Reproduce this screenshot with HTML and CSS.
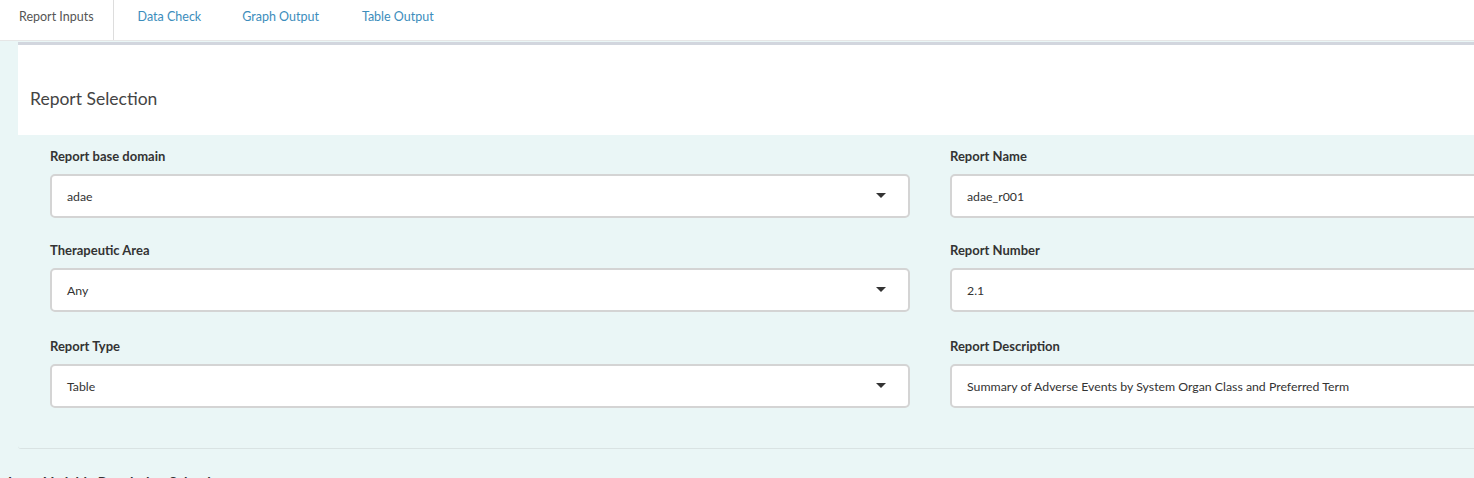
FILE: index.html
```html
<!DOCTYPE html>
<html>
<head>
<meta charset="utf-8">
<link rel="stylesheet" href="styles.css">
</head>
<body>
<div class="tabs">
  <div class="tab active">Report Inputs</div>
  <div class="tab">Data Check</div>
  <div class="tab">Graph Output</div>
  <div class="tab">Table Output</div>
</div>
<div class="content">
  <div class="box">
    <div class="box-header">Report Selection</div>
    <div class="box-body">
      <div class="field">
        <div class="label">Report base domain</div>
        <div class="input select">adae<span class="caret"></span></div>
      </div>
      <div class="field">
        <div class="label">Report Name</div>
        <div class="input">adae_r001</div>
      </div>
      <div class="field">
        <div class="label">Therapeutic Area</div>
        <div class="input select">Any<span class="caret"></span></div>
      </div>
      <div class="field">
        <div class="label">Report Number</div>
        <div class="input">2.1</div>
      </div>
      <div class="field">
        <div class="label">Report Type</div>
        <div class="input select">Table<span class="caret"></span></div>
      </div>
      <div class="field">
        <div class="label">Report Description</div>
        <div class="input">Summary of Adverse Events by System Organ Class and Preferred Term</div>
      </div>
    </div>
  </div>
  <div class="next">Input Variable Population Selection</div>
</div>
</body>
</html>
```
FILE: styles.css
```css
html, body {
  margin: 0;
  padding: 0;
}
body {
  font-family: "Lato", "Source Sans Pro", sans-serif;
  background: #eaf6f6;
  color: #333;
  overflow: hidden;
  width: 1474px;
  height: 478px;
}
.tabs {
  display: flex;
  height: 40px;
  background: #fff;
  border-bottom: 1px solid #e6e6e6;
}
.tab {
  font-size: 12.5px;
  color: #3c8dbc;
  line-height: 33px;
  padding: 0 22px 0 21px;
}
.tab:nth-child(2) {
  padding-left: 24px;
}
.tab:nth-child(3) {
  padding-left: 19px;
}
.tab.active {
  color: #555;
  padding: 0 19px 0 19px;
  border-right: 1px solid #ddd;
}
.content {
  padding-top: 1px;
  padding-left: 18px;
}
.box {
  border-top: 3px solid #d2d6de;
  background: #eaf6f6;
  border-bottom: 1px solid #d9e3e3;
  border-bottom-left-radius: 3px;
  width: 1600px;
}
.box-header {
  background: #fff;
  height: 90px;
  box-sizing: border-box;
  padding: 43px 12px 0;
  font-size: 17.5px;
  color: #444;
}
.box-body {
  display: grid;
  grid-template-columns: 860px 860px;
  column-gap: 40px;
  padding: 11px 32px 19px;
}
.field {
  display: flex;
  flex-direction: column;
}
.label {
  font-weight: bold;
  font-size: 13px;
  color: #333;
  line-height: 20px;
  margin-bottom: 8px;
}
.input {
  position: relative;
  height: 44px;
  box-sizing: border-box;
  background: #fff;
  border: 2px solid #d4d4d4;
  border-radius: 5px;
  font-size: 12.3px;
  color: #333;
  padding: 0 15px;
  display: flex;
  align-items: center;
  margin-bottom: 22px;
}
.field:nth-child(n+3):nth-child(-n+4) .input {
  margin-bottom: 24px;
}
.field:nth-last-child(-n+2) .input {
  margin-bottom: 21px;
}
.caret {
  position: absolute;
  right: 22px;
  top: 17px;
  width: 0;
  height: 0;
  border-left: 5px solid transparent;
  border-right: 5px solid transparent;
  border-top: 5px solid #333;
}
.next {
  margin-left: -18px;
  padding-left: 8px;
  margin-top: 24px;
  font-size: 14px;
  font-weight: bold;
  color: #333;
}
```
